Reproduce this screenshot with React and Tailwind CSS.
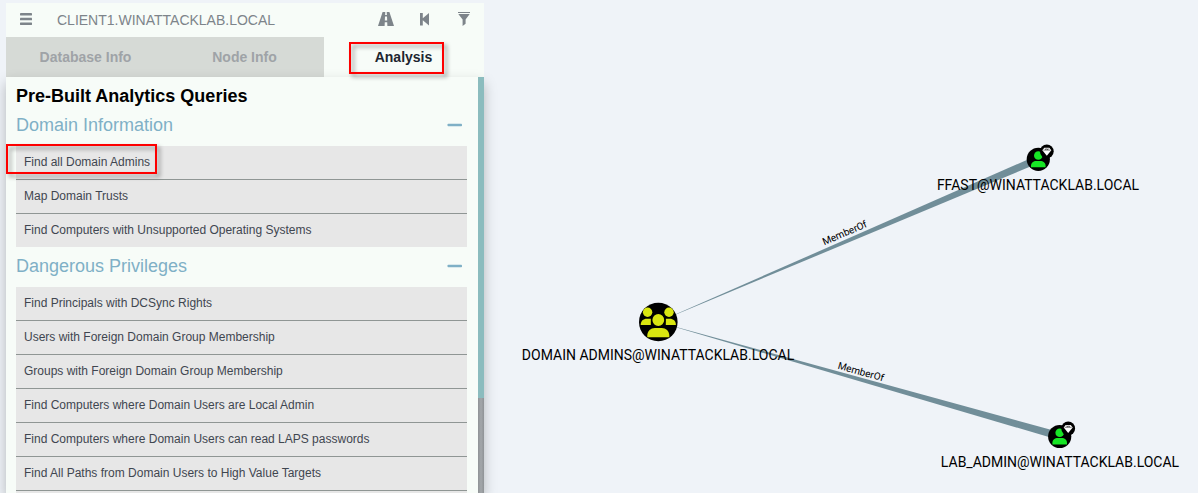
import React from "react";

const sections = [
  {
    title: "Domain Information",
    queries: [
      "Find all Domain Admins",
      "Map Domain Trusts",
      "Find Computers with Unsupported Operating Systems",
    ],
  },
  {
    title: "Dangerous Privileges",
    queries: [
      "Find Principals with DCSync Rights",
      "Users with Foreign Domain Group Membership",
      "Groups with Foreign Domain Group Membership",
      "Find Computers where Domain Users are Local Admin",
      "Find Computers where Domain Users can read LAPS passwords",
      "Find All Paths from Domain Users to High Value Targets",
    ],
  },
];

const HIGHLIGHT =
  "pointer-events-none absolute z-10 border-2 border-[#fe0000] drop-shadow-[3px_3px_2px_rgba(0,0,0,0.4)]";

function Header() {
  return (
    <div className="flex h-[34px] items-center bg-[#f7fcf8] pr-3.5 pl-3.5 text-[#7d848a]">
      <button type="button" aria-label="More info" className="shrink-0 pb-0.5">
        <svg viewBox="0 0 12 14" className="h-3.5 w-3 fill-current">
          <rect y="1" width="12" height="2.5" rx="0.4" />
          <rect y="5.8" width="12" height="2.5" rx="0.4" />
          <rect y="10.5" width="12" height="2.5" rx="0.4" />
        </svg>
      </button>
      <input
        aria-label="Search for a node"
        defaultValue="CLIENT1.WINATTACKLAB.LOCAL"
        className="ml-[25px] min-w-0 flex-1 bg-transparent text-sm outline-none"
      />
      <div className="flex shrink-0 items-center pb-0.5">
        <button type="button" aria-label="Pathfinding">
          <svg viewBox="0 0 16 14" className="h-3.5 w-4 fill-current">
            <path
              d="M4.6 0H7.3L7.1 3H8.9L8.7 0H11.4L16 14H9.4L9.2 10.2H6.8L6.6 14H0ZM7 4.6L6.8 8.4H9.2L9 4.6Z"
              fillRule="evenodd"
            />
          </svg>
        </button>
        <button type="button" aria-label="Back" className="ml-[26px]">
          <svg viewBox="0 0 9 14" className="h-3.5 w-[9px] fill-current">
            <path d="M0 1H2.8V6.2L9 1V13.5L2.8 8.3V13.5H0Z" />
          </svg>
        </button>
        <button type="button" aria-label="Filter edges" className="ml-[29px]">
          <svg viewBox="0 0 12 14" className="h-3.5 w-3 fill-current">
            <path d="M0 0H12V1.1H0ZM0.3 2H11.7L7.6 7.5V11.8L4.6 14V7.5Z" />
          </svg>
        </button>
      </div>
    </div>
  );
}

function Tabs() {
  return (
    <div role="tablist" className="grid h-10 grid-cols-3 bg-[#f7fcf8] pr-px text-sm font-bold">
      <button type="button" role="tab" aria-selected="false" className="bg-[#d6dad6] text-[#9fa3a7]">
        Database Info
      </button>
      <button type="button" role="tab" aria-selected="false" className="bg-[#d6dad6] text-[#9fa3a7]">
        Node Info
      </button>
      <button type="button" role="tab" aria-selected="true" className="relative text-[#20252f]">
        Analysis
        <span className={HIGHLIGHT + " top-[5px] left-[25px] h-8 w-[95px]"} />
      </button>
    </div>
  );
}

function Section({ title, queries, marked, continues }) {
  return (
    <section>
      <h2 className="flex h-10 items-center justify-between pr-1 pb-0.5 text-lg text-[#7fb0c6]">
        {title}
        <button type="button" aria-label={"Collapse " + title}>
          <svg viewBox="0 0 16 4" className="h-1 w-4">
            <rect x="0.5" y="0.8" width="14.5" height="2.4" rx="0.8" fill="#7fb0c6" />
          </svg>
        </button>
      </h2>
      <ul className="divide-y divide-[#8f9694] bg-[#e7e7e7]">
        {queries.map((query, i) => (
          <li key={query} className="relative">
            <button
              type="button"
              className="block w-full px-2 pt-1.5 pb-[7px] text-left text-xs leading-5 text-[#3f4650]"
            >
              {query}
            </button>
            {marked === i && <span className={HIGHLIGHT + " -top-0.5 -left-2.5 h-[30px] w-[151px]"} />}
          </li>
        ))}
        {continues && <li aria-hidden="true" className="h-8" />}
      </ul>
    </section>
  );
}

function UserNode({ x, y }) {
  return (
    <g transform={`translate(${x} ${y})`}>
      <circle r="11.6" />
      <circle cx="0" cy="-3.8" r="4.3" fill="#17e625" />
      <path d="M-7.3 8V6.5C-7.3 3.3-4.8 1.6-2 1.6H2C4.8 1.6 7.3 3.3 7.3 6.5V8Z" fill="#17e625" />
      <circle cx="8.5" cy="-8" r="6.9" />
      <path d="M6-11.6H11L13-9L8.5-3.6L4-9Z" fill="#fff" />
      <path d="M5-9.2H12M7-10.9L7.5-9.4L8.5-10.8L9.5-9.4L10-10.9" fill="none" stroke="#000" strokeWidth="0.5" />
    </g>
  );
}

function GroupNode({ x, y }) {
  return (
    <g transform={`translate(${x} ${y})`}>
      <circle r="19.3" />
      <g fill="#d9e610">
        <circle cx="-10.7" cy="-9.7" r="4.7" />
        <circle cx="10.7" cy="-9.7" r="4.7" />
        <path d="M-17.6 3C-17.6-1-15-3.2-11.5-3.2H-7.5V3Z" />
        <path d="M17.6 3C17.6-1 15-3.2 11.5-3.2H7.5V3Z" />
        <circle cx="0" cy="-2" r="6.6" stroke="#000" strokeWidth="1.4" />
        <path d="M-11 15.2V13.5C-11 9-7.5 6-3.5 6H3.5C7.5 6 11 9 11 13.5V15.2Z" />
      </g>
    </g>
  );
}

function Graph() {
  return (
    <svg
      viewBox="484 0 714 493"
      role="img"
      aria-label="Domain admins graph"
      className="h-full w-full font-['Roboto',sans-serif]"
    >
      <g fill="#718e99">
        <path d="M658 322L1037 155.5L1040 162.5Z" />
        <path d="M658 322L1061 432.5L1059 440Z" />
      </g>
      <GroupNode x={658.3} y={322} />
      <UserNode x={1038.3} y={159.3} />
      <UserNode x={1059.7} y={436.5} />
      <g textAnchor="middle" className="text-sm">
        <text x="658" y="360">DOMAIN ADMINS@WINATTACKLAB.LOCAL</text>
        <text x="1038" y="190">FFAST@WINATTACKLAB.LOCAL</text>
        <text x="1060" y="467">LAB_ADMIN@WINATTACKLAB.LOCAL</text>
      </g>
      <g textAnchor="middle" className="text-[10px]">
        <text transform="translate(846 236) rotate(-23.2)">MemberOf</text>
        <text transform="translate(860 375) rotate(15.6)">MemberOf</text>
      </g>
    </svg>
  );
}

export default function App() {
  return (
    <div className="flex h-screen overflow-hidden bg-[#eff3f8] font-['Liberation_Sans',Arial,sans-serif]">
      <aside className="ml-1.5 flex w-[478px] shrink-0 flex-col pt-[3px]">
        <Header />
        <Tabs />
        <div className="flex min-h-0 flex-1 bg-[#f7fcf8] shadow-[0_6px_12px_rgba(0,0,0,0.25)]">
          <div className="min-w-0 flex-1 overflow-hidden pr-[11px] pl-2.5">
            <h1 className="pt-[9px] text-lg leading-5 font-bold text-black">Pre-Built Analytics Queries</h1>
            <Section {...sections[0]} marked={0} />
            <Section {...sections[1]} continues />
          </div>
          <div className="w-1.5 bg-linear-to-r from-[#8f9396] via-[#a3a7aa] to-[#8f9396]">
            <div className="h-[77.2%] bg-[#8bbcbe]" />
          </div>
        </div>
      </aside>
      <main className="min-w-0 flex-1">
        <Graph />
      </main>
    </div>
  );
}
